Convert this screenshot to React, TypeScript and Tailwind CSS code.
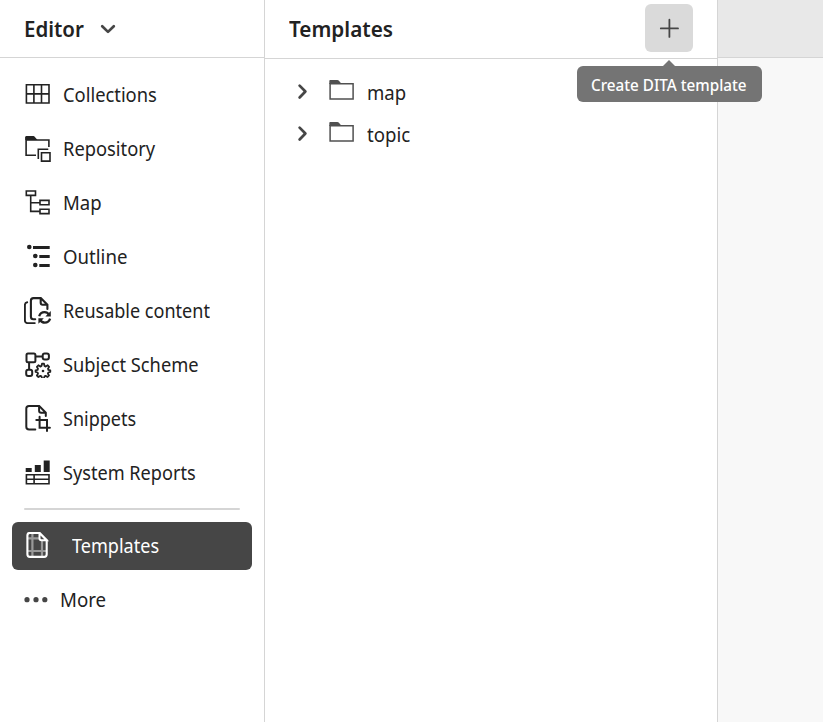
import React from 'react';

const TEXT = "block whitespace-nowrap origin-left";

function Label({ text, width, className = '' }: { text: string; width: number; className?: string }) {
  const ref = React.useRef<HTMLSpanElement>(null);
  const [scale, setScale] = React.useState(1);
  React.useLayoutEffect(() => {
    if (ref.current) setScale(width / ref.current.offsetWidth);
  }, [width]);
  return (
    <span className="block shrink-0" style={{ width }}>
      <span ref={ref} className={`${TEXT} w-max ${className}`} style={{ transform: `scaleX(${scale})` }}>
        {text}
      </span>
    </span>
  );
}

// Every sidebar glyph is drawn in a 28px square.
function Glyph({ y, children }: { y: number; children: React.ReactNode }) {
  return (
    <svg viewBox={`24 ${y} 28 28`} className="size-7 shrink-0" fill="none" stroke="currentColor" strokeWidth="1.6">
      {children}
    </svg>
  );
}

const items = [
  {
    name: 'Collections', width: 94,
    icon: <Glyph y={80}><path d="M26.4 84.7h22.6v18.3H26.4zM33.9 84.7V103M41.5 84.7V103M26.4 93.9H49" /></Glyph>,
  },
  {
    name: 'Repository', width: 92,
    icon: (
      <Glyph y={134}>
        <path d="M36 155.2H26.1V137M26.1 140h22.8v7" />
        <path d="M25.3 137q0-.9.9-.9h7.3q.7 0 1.2.6l2.8 3.2H25.3z" fill="currentColor" stroke="none" />
        <path d="M38.3 159v-9.8h10M41.5 152.7h8.5v8.4h-8.5z" />
      </Glyph>
    ),
  },
  {
    name: 'Map', width: 39,
    icon: <Glyph y={188}><path d="M26.3 191h9.2v4.4h-9.2zM30.7 195.4v16h9M30.7 202.7h9M40 200.4h9v4.4h-9zM40 209.2h9v4.4h-9z" /></Glyph>,
  },
  {
    name: 'Outline', width: 64,
    icon: (
      <Glyph y={241.6}>
        <g fill="currentColor" stroke="none">
          <circle cx="29.3" cy="246.6" r="2.3" /><circle cx="35.3" cy="255.6" r="2.3" /><circle cx="35.3" cy="264.6" r="2.3" />
          <path d="M33 245.6h16.7v3H33zM39.3 254.6h10.4v3H39.3zM39.3 263.6h10.4v3H39.3z" />
        </g>
      </Glyph>
    ),
  },
  {
    name: 'Reusable content', width: 147,
    icon: (
      <Glyph y={296}>
        <g strokeLinecap="round">
          <path d="M27.2 302.3q-2.3.3-2.3 2.7v15.5q0 2.6 2.6 2.6h7.3" strokeWidth="1.9" />
          <path d="M35.2 319.2h-1.8q-2.5 0-2.5-2.5v-16q0-2.6 2.6-2.6h7.3l6.6 6.7v4.2M40.7 298.4v4.4q0 2 2 2h4.4" strokeWidth="2.1" />
          <path d="M39.2 316.2q1.2-4.1 5.3-4.1 3 0 4.7 2.8M50.1 318.6q-1.3 4-5.3 4-3.1 0-4.8-2.6" strokeWidth="2.3" strokeLinecap="butt" />
        </g>
        <path d="M50.8 311v5.4h-5.4zM38.4 323.7v-5.4h5.4z" fill="currentColor" stroke="none" />
      </Glyph>
    ),
  },
  {
    name: 'Subject Scheme', width: 136,
    icon: (
      <Glyph y={350}>
        <g strokeWidth="2">
          <rect x="26.5" y="353.4" width="8.9" height="8.8" rx="1.5" />
          <rect x="42.7" y="353.4" width="6.2" height="6.2" rx="2" />
          <rect x="26.2" y="369.8" width="6" height="6.3" rx="2" />
          <path d="M35.4 356.5h7.2M29.1 362.4v7.4" />
          <path strokeWidth="1.8" strokeLinejoin="round" d="m41.5 366 .5-2.3h2l.5 2.3 1.2.6 2-1.3 1.4 1.6-1.1 1.9.4 1.1 1.9.4v1.6l-2 .6-.4 1.1 1.1 1.9-1.4 1.5-2-1.1-1.1.5-.5 2.1h-2l-.5-2.1-1.2-.5-1.9 1.1-1.5-1.5 1.1-1.9-.4-1.1-2-.6v-1.6l2-.4.4-1.1-1.1-1.9 1.5-1.6 1.9 1.3z" />
          <circle cx="43" cy="371" r="1.3" fill="currentColor" stroke="none" />
        </g>
      </Glyph>
    ),
  },
  {
    name: 'Snippets', width: 73,
    icon: (
      <Glyph y={404}>
        <g strokeWidth="2" strokeLinecap="round">
          <path d="M35.3 429.6h-6.2q-2.8 0-2.8-2.8v-18.2q0-2.7 2.7-2.7h10.2l6.6 6.8v3.2M39.1 406.1v4.6q0 2 2 2h4.5" />
          <path d="M36.3 420.1H47v10.8M39.6 416.8v10.9h10.3" />
        </g>
      </Glyph>
    ),
  },
  {
    name: 'System Reports', width: 133,
    icon: (
      <Glyph y={458}>
        <path d="M25.7 468h6v4h-6zM34.8 465.1h6v6.9h-6zM43.7 460.4h6V472h-6z" fill="currentColor" stroke="none" />
        <path d="M26.4 474.8H49v8.9H26.4zM26.4 479.3H49M34.1 474.8v8.9" />
      </Glyph>
    ),
  },
];

function TreeRow({ name, width }: { name: string; width: number }) {
  return (
    <div className="flex h-[42px] items-center">
      <svg viewBox="296 80 14 24" className="h-6 w-3.5 text-[#464646]" fill="none" stroke="currentColor" strokeWidth="2.7" strokeLinecap="round" strokeLinejoin="round">
        <path d="m299.6 85.6 5.8 5.9-5.8 6" />
      </svg>
      <svg viewBox="328 80 28 24" className="ml-[18px] h-6 w-7 text-[#505050]" fill="none" stroke="currentColor" strokeWidth="1.5">
        <path d="M330.1 83.8h23v15.1h-23z" />
        <path d="M329.3 81q0-.9.9-.9h7.2q.8 0 1.3.5l3 3.3h-12.4z" fill="currentColor" stroke="none" />
      </svg>
      <div className="ml-[11px] pt-px"><Label text={name} width={width} /></div>
    </div>
  );
}

export default function App() {
  return (
    <div className="flex h-[722px] w-[823px] overflow-hidden bg-white font-['Noto_Sans','Open_Sans',sans-serif] text-[19.5px] leading-6 text-[#222]">
      <aside className="flex w-[265px] shrink-0 flex-col border-r border-[#d5d5d5]">
        <header className="flex h-[58px] shrink-0 items-center border-b border-[#d5d5d5] pl-6">
          <Label text="Editor" width={60} className="text-[21.5px] font-semibold" />
          <svg viewBox="100 20 16 16" className="ml-4 size-4 text-[#464646]" fill="none" stroke="currentColor" strokeWidth="2.7" strokeLinecap="round" strokeLinejoin="round">
            <path d="m102.2 25.2 5.8 5.7 5.8-5.7" />
          </svg>
        </header>
        <nav className="flex flex-col pt-[9px]">
          {items.map((item) => (
            <a key={item.name} className="flex h-[54px] items-center gap-[11px] pl-6">
              {item.icon}
              <div className="pt-px"><Label text={item.name} width={item.width} /></div>
            </a>
          ))}
        </nav>
        <hr className="mx-6 mt-[9px] h-0.5 rounded border-0 bg-[#d5d5d5]" />
        <a className="mx-3 mt-3 flex h-12 items-center rounded-md bg-[#464646] pl-3 text-white">
          <Glyph y={532}>
            <g stroke="#999" strokeWidth="2.2"><path d="M32.4 533v24M42 540v17M27 538.4h12M27 551h20" /></g>
            <path d="M29.7 533h9.8l7.2 7.3v14q0 2.6-2.6 2.6H29.9q-2.5 0-2.5-2.6v-18.7q0-2.6 2.3-2.6z" strokeWidth="2.1" />
            <path d="M39.5 533v5.3q0 2 2 2h5.2z" fill="#464646" strokeWidth="2" />
          </Glyph>
          <div className="ml-5"><Label text="Templates" width={87} /></div>
        </a>
        <a className="flex h-[60px] items-center gap-2 pl-6">
          <svg viewBox="0 0 28 6" className="h-1.5 w-7 text-[#464646]" fill="currentColor">
            <circle cx="3" cy="2.7" r="2.6" /><circle cx="12" cy="2.7" r="2.6" /><circle cx="20.8" cy="2.7" r="2.6" />
          </svg>
          <Label text="More" width={46} />
        </a>
      </aside>

      <section className="flex w-[453px] shrink-0 flex-col border-r border-[#d5d5d5]">
        <header className="flex h-[59px] shrink-0 items-center justify-between border-b border-[#d5d5d5] pr-6 pb-0.5 pl-6">
          <div className="pt-0.5"><Label text="Templates" width={104} className="text-[21.5px] font-semibold" /></div>
          <div className="relative">
            <button className="flex size-12 items-center justify-center rounded-md bg-[#dadada] text-[#464646]">
              <svg viewBox="0 0 24 24" className="size-6" fill="none" stroke="currentColor" strokeWidth="1.8" strokeLinecap="round">
                <path d="M12.4 3.7v17.2M3.8 12.4H21" />
              </svg>
            </button>
            <div className="absolute top-[62px] left-[-68px] z-10 flex h-9 w-[185px] items-center rounded-md bg-[#747474] pt-0.5 pl-3.5 text-[16.5px] font-medium text-white">
              <svg viewBox="0 0 12 6" className="absolute -top-1.5 left-[86px] h-1.5 w-3" fill="#747474"><path d="M0 6 6 0l6 6z" /></svg>
              <Label text="Create DITA template" width={156} />
            </div>
          </div>
        </header>
        <div className="flex flex-col pt-3 pl-[31px]">
          <TreeRow name="map" width={39} />
          <TreeRow name="topic" width={43} />
        </div>
      </section>

      <main className="flex flex-1 flex-col bg-[#f8f8f8]">
        <div className="h-[58px] border-b border-[#d5d5d5] bg-[#e8e8e8]" />
      </main>
    </div>
  );
}
